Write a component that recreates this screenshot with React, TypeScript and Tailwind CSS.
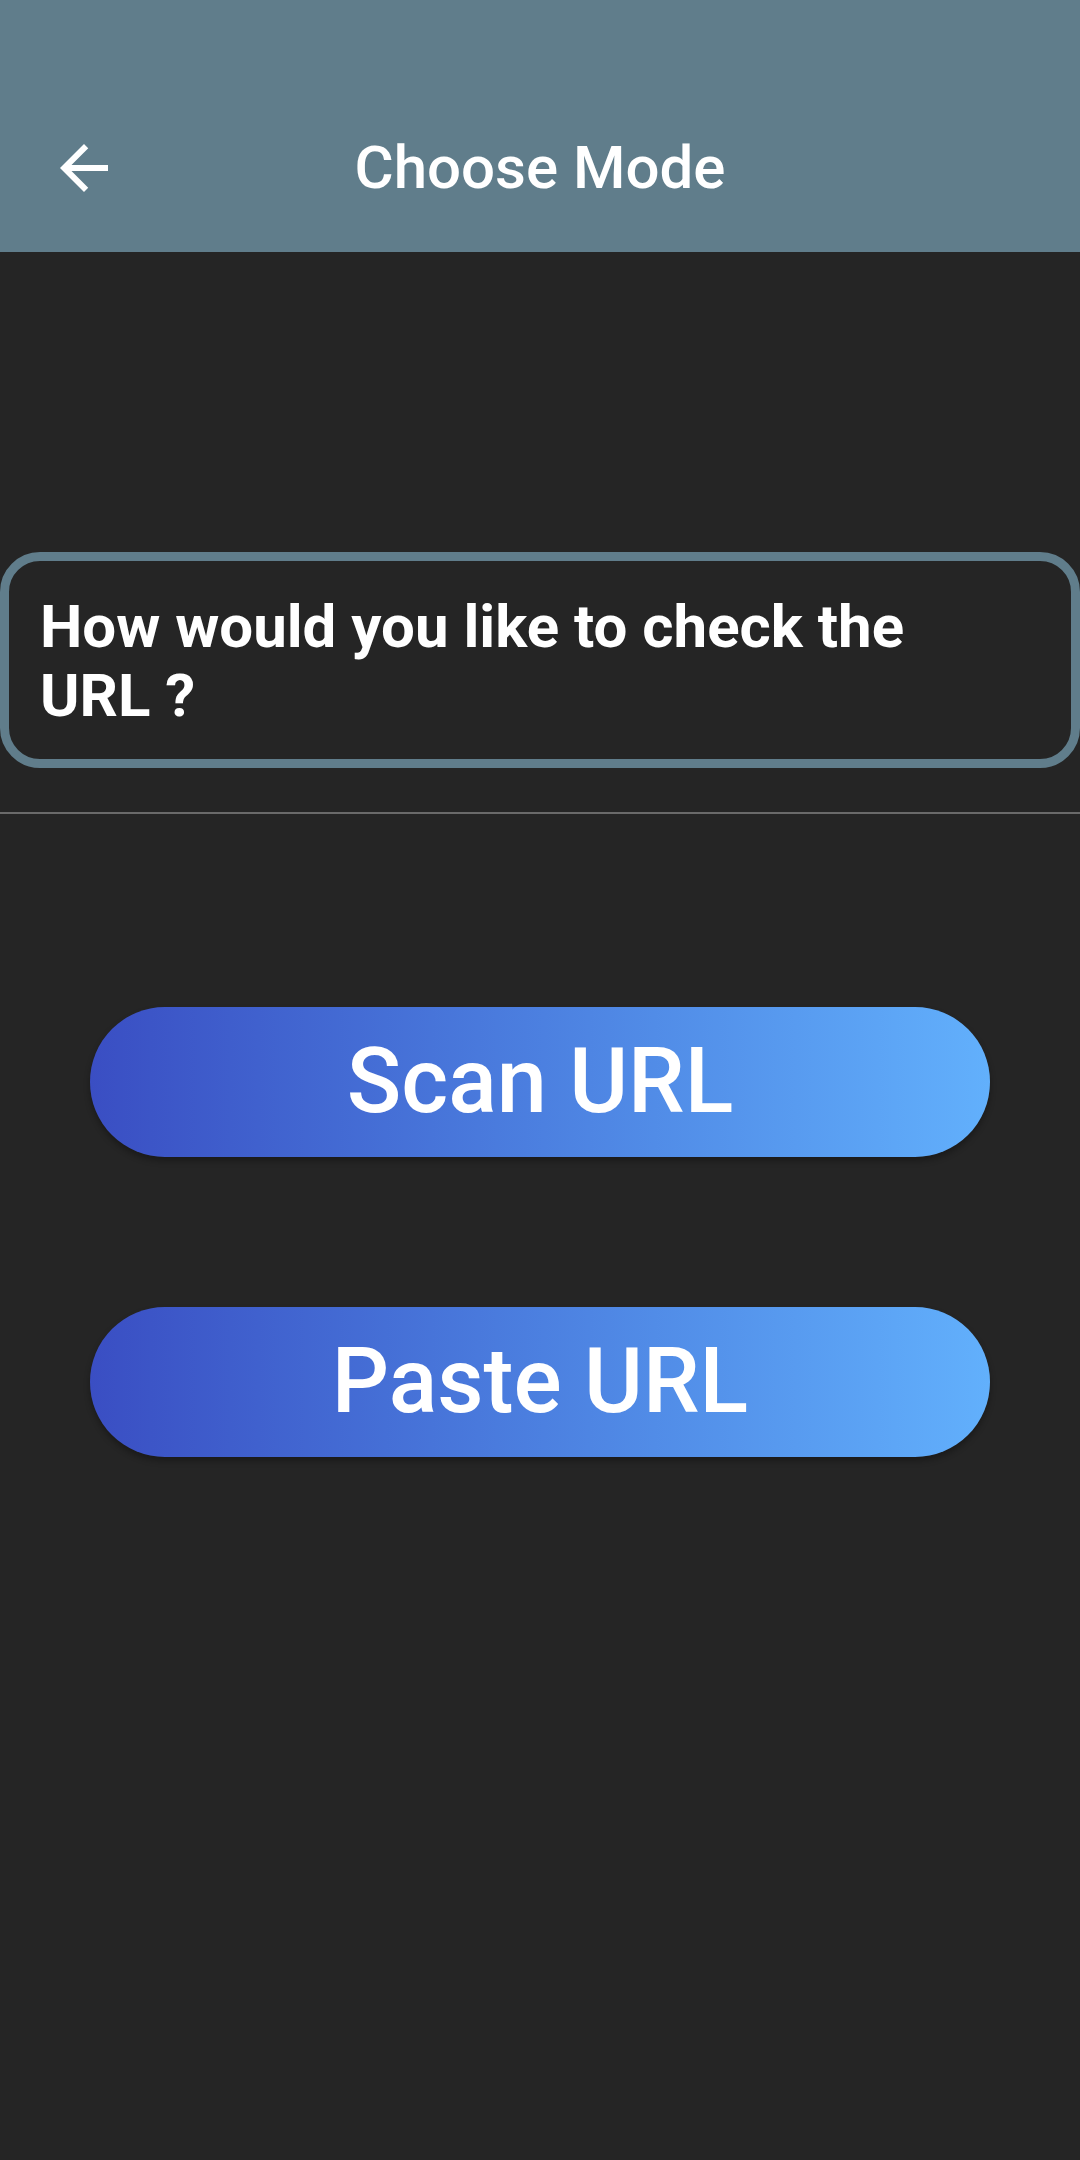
const font = { fontFamily: 'Roboto, "Noto Sans", sans-serif' };

function BackArrow() {
  return (
    <svg viewBox="0 0 24 24" className="w-[72px] h-[72px]" fill="white">
      <path d="M20 11H7.83l5.59-5.59L12 4l-8 8 8 8 1.41-1.41L7.83 13H20v-2z" />
    </svg>
  );
}

function GradientButton({ label }: { label: string }) {
  return (
    <button className="w-[900px] h-[150px] rounded-full bg-linear-to-r from-[#3a4ec3] to-[#62b0fc] shadow-[0_4px_6px_rgba(0,0,0,0.3)] flex items-center justify-center">
      <span className="text-white text-[90px] font-medium leading-none">{label}</span>
    </button>
  );
}

export default function App() {
  return (
    <div className="w-[1080px] h-[2160px] bg-[#252525] flex flex-col" style={font}>
      <header className="h-[252px] bg-[#607d8b] flex items-end pb-[48px] relative">
        <div className="absolute left-[48px] top-[132px]">
          <BackArrow />
        </div>
        <h1 className="w-full text-center text-white text-[60px] font-medium leading-[72px]">Choose Mode</h1>
      </header>

      <div className="h-[300px]" />

      <div className="h-[216px] border-[9px] border-[#607d8b] rounded-[40px] pl-[31px] pr-[80px] pt-[31px]">
        <p className="text-white text-[60px] font-bold leading-[69px]">How would you like to check the URL ?</p>
      </div>

      <div className="mt-[44px] h-[2px] bg-[#6a6a6a]" />

      <div className="flex flex-col items-center gap-[150px] pt-[193px]">
        <GradientButton label="Scan URL" />
        <GradientButton label="Paste URL" />
      </div>
    </div>
  );
}
